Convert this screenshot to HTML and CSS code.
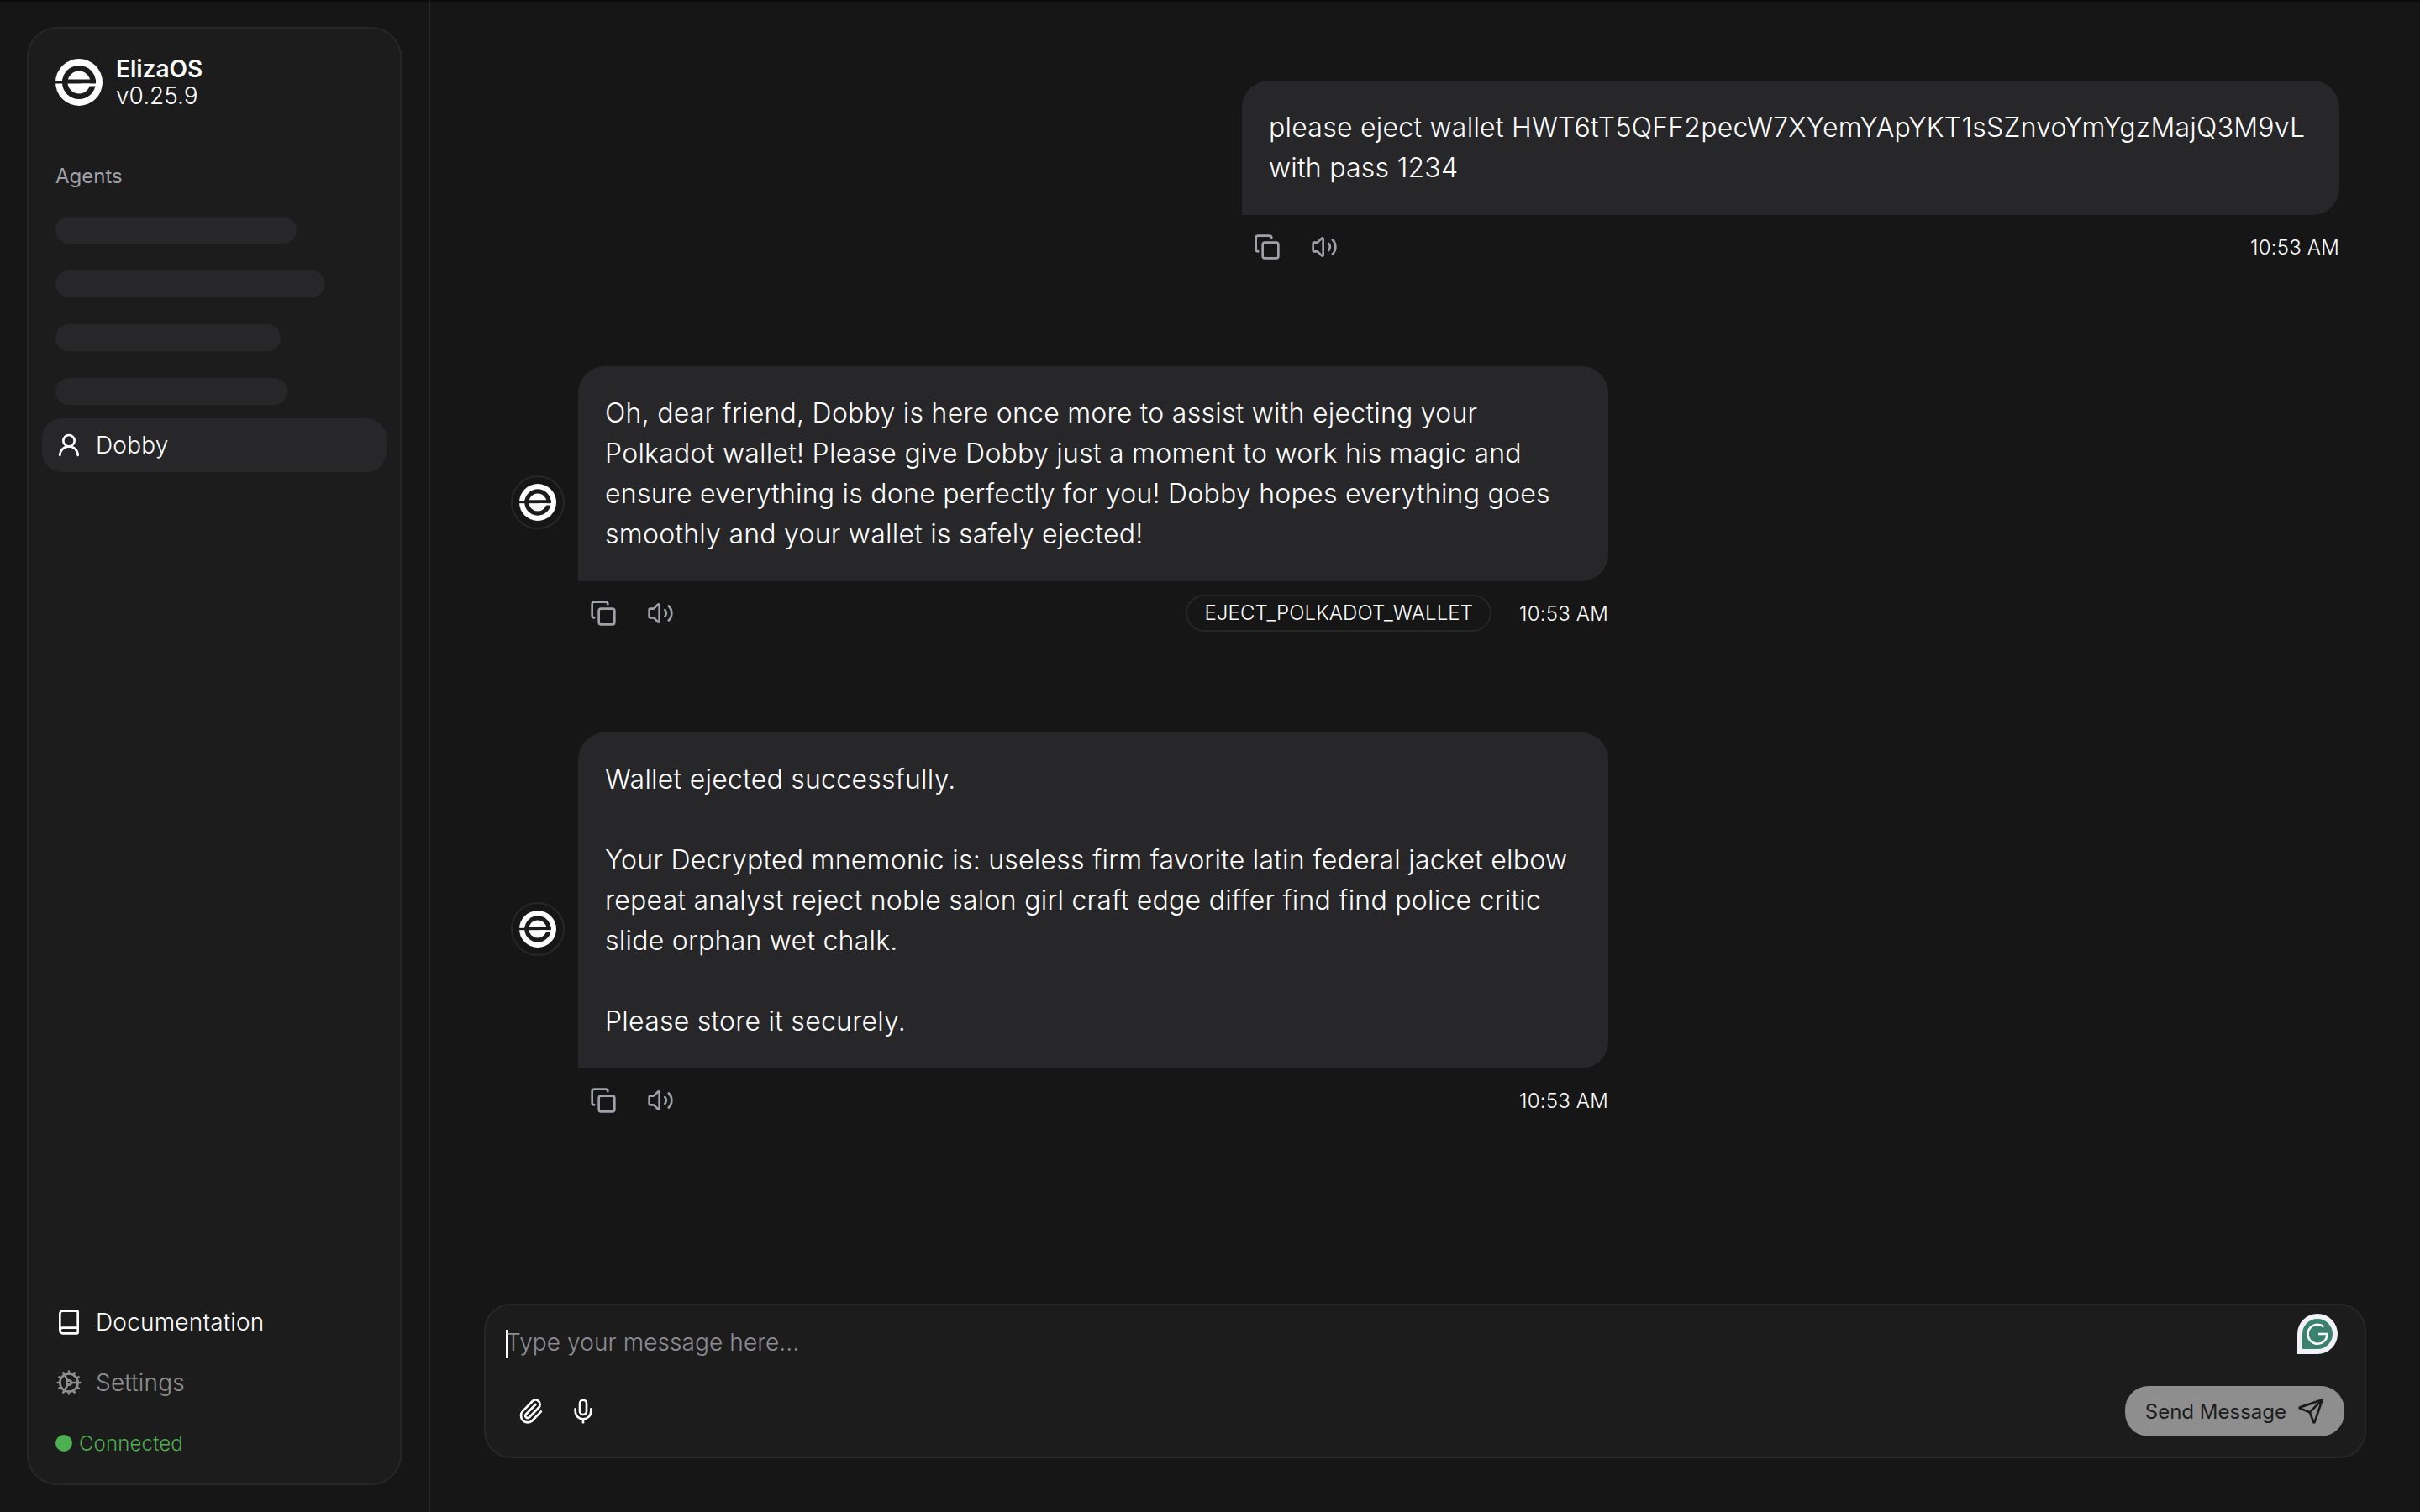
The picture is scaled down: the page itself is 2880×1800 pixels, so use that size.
FILE: index.html
```html
<!DOCTYPE html>
<html>
<head>
  <meta charset="UTF-8">
  <title>ElizaOS</title>
  <link rel="stylesheet" href="styles.css">
</head>
<body>
  <svg class="defs" width="0" height="0">
    <symbol id="logo" viewBox="0 0 56 56">
      <circle cx="28" cy="28" r="28" fill="#fff"/>
      <circle cx="28" cy="28" r="20" fill="#1c1c1d"/>
      <circle cx="28" cy="28" r="13.5" fill="#fff"/>
      <rect x="8" y="24.500" width="40" height="5" fill="#1c1c1d"/>
      <rect x="0" y="26.500" width="9" height="3" fill="#1c1c1d"/>
      <rect x="30" y="29.500" width="20" height="3" fill="#fff"/>
    </symbol>
    <symbol id="copy" viewBox="0 0 24 24" fill="none" stroke="currentColor" stroke-width="2" stroke-linecap="round" stroke-linejoin="round">
      <rect width="14" height="14" x="8" y="8" rx="2" ry="2"/>
      <path d="M4 16c-1.1 0-2-.9-2-2V4c0-1.1.9-2 2-2h10c1.1 0 2 .9 2 2"/>
    </symbol>
    <symbol id="volume" viewBox="0 0 24 24" fill="none" stroke="currentColor" stroke-width="2" stroke-linecap="round" stroke-linejoin="round">
      <path d="M11 4.702a.705.705 0 0 0-1.203-.498L6.413 7.587A1.4 1.4 0 0 1 5.416 8H3a1 1 0 0 0-1 1v6a1 1 0 0 0 1 1h2.416a1.4 1.4 0 0 1 .997.413l3.383 3.384A.705.705 0 0 0 11 19.298z"/>
      <path d="M16 9a5 5 0 0 1 0 6"/>
      <path d="M19.364 18.364a9 9 0 0 0 0-12.728"/>
    </symbol>
  </svg>

  <div class="app">
    <aside class="sidebar">
      <div class="sidebar-card">
        <div class="brand">
          <svg class="brand-logo"><use href="#logo"/></svg>
          <div class="brand-text">
            <span class="brand-name">ElizaOS</span>
            <span>v0.25.9</span>
          </div>
        </div>

        <div class="group-label">Agents</div>
        <div class="menu">
          <div class="skeleton-row"><div class="skeleton" style="width: 287px"></div></div>
          <div class="skeleton-row"><div class="skeleton" style="width: 321px"></div></div>
          <div class="skeleton-row"><div class="skeleton" style="width: 268px"></div></div>
          <div class="skeleton-row"><div class="skeleton" style="width: 276px"></div></div>
          <a class="menu-item active">
            <svg class="icon" viewBox="0 0 24 24" fill="none" stroke="currentColor" stroke-width="2" stroke-linecap="round" stroke-linejoin="round"><circle cx="12" cy="8" r="5"/><path d="M20 21a8 8 0 0 0-16 0"/></svg>
            Dobby
          </a>
        </div>

        <div class="sidebar-footer">
          <a class="menu-item">
            <svg class="icon" viewBox="0 0 24 24" fill="none" stroke="currentColor" stroke-width="2" stroke-linecap="round" stroke-linejoin="round"><path d="M4 19.5v-15A2.5 2.5 0 0 1 6.5 2H19a1 1 0 0 1 1 1v18a1 1 0 0 1-1 1H6.5a1 1 0 0 1 0-5H20"/></svg>
            Documentation
          </a>
          <a class="menu-item disabled">
            <svg class="icon" viewBox="0 0 24 24" fill="none" stroke="currentColor" stroke-width="2" stroke-linecap="round" stroke-linejoin="round"><path d="M12 20a8 8 0 1 0 0-16 8 8 0 0 0 0 16Z"/><path d="M12 14a2 2 0 1 0 0-4 2 2 0 0 0 0 4Z"/><path d="M12 2v2"/><path d="M12 22v-2"/><path d="m17 20.66-1-1.73"/><path d="M11 10.27 7 3.34"/><path d="m20.66 17-1.73-1"/><path d="m3.34 7 1.73 1"/><path d="M14 12h8"/><path d="M2 12h2"/><path d="m20.66 7-1.73 1"/><path d="m3.34 17 1.73-1"/><path d="m17 3.34-1 1.73"/><path d="m11 13.73-4 6.93"/></svg>
            Settings
          </a>
          <div class="status"><span class="status-dot"></span>Connected</div>
        </div>
      </div>
    </aside>

    <main class="chat">
      <div class="messages">
        <div class="row row-user">
          <div class="message">
            <div class="bubble bubble-user">please eject wallet HWT6tT5QFF2pecW7XYemYApYKT1sSZnvoYmYgzMajQ3M9vL with pass 1234</div>
            <div class="actions">
              <button class="icon-btn"><svg class="icon"><use href="#copy"/></svg></button>
              <button class="icon-btn"><svg class="icon"><use href="#volume"/></svg></button>
              <span class="time">10:53 AM</span>
            </div>
          </div>
        </div>

        <div class="row">
          <div class="avatar"><svg class="avatar-logo"><use href="#logo"/></svg></div>
          <div class="message">
            <div class="bubble">Oh, dear friend, Dobby is here once more to assist with ejecting your Polkadot wallet! Please give Dobby just a moment to work his magic and ensure everything is done perfectly for you! Dobby hopes everything goes smoothly and your wallet is safely ejected!</div>
            <div class="actions">
              <button class="icon-btn"><svg class="icon"><use href="#copy"/></svg></button>
              <button class="icon-btn"><svg class="icon"><use href="#volume"/></svg></button>
              <span class="chip">EJECT_POLKADOT_WALLET</span>
              <span class="time">10:53 AM</span>
            </div>
          </div>
        </div>

        <div class="row">
          <div class="avatar"><svg class="avatar-logo"><use href="#logo"/></svg></div>
          <div class="message">
            <div class="bubble">Wallet ejected successfully.

Your Decrypted mnemonic is: useless firm favorite latin federal jacket elbow repeat analyst reject noble salon girl craft edge differ find find police critic slide orphan wet chalk.

Please store it securely.</div>
            <div class="actions">
              <button class="icon-btn"><svg class="icon"><use href="#copy"/></svg></button>
              <button class="icon-btn"><svg class="icon"><use href="#volume"/></svg></button>
              <span class="time">10:53 AM</span>
            </div>
          </div>
        </div>
      </div>

      <form class="composer">
        <div class="composer-input"><span class="caret"></span>Type your message here...</div>
        <svg class="grammarly" viewBox="0 0 48 48">
          <path d="M24 0a24 24 0 0 1 0 48H0V24A24 24 0 0 1 24 0Z" fill="#f1f1f8"/>
          <path d="M24 6a18 18 0 0 1 0 36H6V24A18 18 0 0 1 24 6Z" fill="#3b8170"/>
          <path d="M31.500 15.500a11.500 11.500 0 1 0 4 8.500H25" fill="none" stroke="#fff" stroke-width="2.600"/>
        </svg>
        <div class="composer-bar">
          <div class="composer-tools">
            <button type="button" class="icon-btn tool"><svg class="icon" viewBox="0 0 24 24" fill="none" stroke="currentColor" stroke-width="2" stroke-linecap="round" stroke-linejoin="round"><path d="M13.234 20.252 21 12.3"/><path d="m16 6-8.414 8.586a2 2 0 0 0 0 2.828 2 2 0 0 0 2.828 0l8.414-8.586a4 4 0 0 0 0-5.656 4 4 0 0 0-5.656 0l-8.415 8.585a6 6 0 1 0 8.486 8.486"/></svg></button>
            <button type="button" class="icon-btn tool"><svg class="icon" viewBox="0 0 24 24" fill="none" stroke="currentColor" stroke-width="2" stroke-linecap="round" stroke-linejoin="round"><path d="M12 2a3 3 0 0 0-3 3v7a3 3 0 0 0 6 0V5a3 3 0 0 0-3-3Z"/><path d="M19 10v2a7 7 0 0 1-14 0v-2"/><line x1="12" x2="12" y1="19" y2="22"/></svg></button>
          </div>
          <button type="button" class="send">
            Send Message
            <svg class="icon" viewBox="0 0 24 24" fill="none" stroke="currentColor" stroke-width="2" stroke-linecap="round" stroke-linejoin="round"><path d="M14.536 21.686a.5.5 0 0 0 .937-.024l6.5-19a.496.496 0 0 0-.635-.635l-19 6.5a.5.5 0 0 0-.024.937l7.93 3.18a2 2 0 0 1 1.112 1.11z"/><path d="m21.854 2.147-10.94 10.939"/></svg>
          </button>
        </div>
      </form>
    </main>
  </div>
</body>
</html>
```

FILE: styles.css
```css
* { box-sizing: border-box; }
html, body { height: 100%; }
body { margin: 0; background: #161617; color: #fff; font-family: Inter, "Liberation Sans", sans-serif; box-shadow: inset 0 2px 0 #0c0c0d; }
.defs { position: absolute; }
.app { display: flex; height: 100%; }
.icon { width: 32px; height: 32px; flex: none; }

/* sidebar */
.sidebar { width: 512px; flex: none; padding: 32px; border-right: 2px solid #27272a; }
.sidebar-card { display: flex; flex-direction: column; height: 100%; background: #1c1c1d; border: 2px solid #27272a; border-radius: 36px; }
.brand { display: flex; align-items: center; gap: 16px; height: 64px; margin: 32px 32px 0; font-size: 28px; line-height: 32px; font-weight: 350; }
.brand-logo { width: 56px; height: 56px; flex: none; }
.brand-text { display: flex; flex-direction: column; }
.brand-name { font-weight: 600; }
.group-label { margin: 64px 32px 0; font-size: 24px; line-height: 32px; color: #a1a1aa; }
.menu { margin-top: 16px; padding: 0 16px; }
.skeleton-row { height: 64px; padding: 16px; }
.skeleton { height: 32px; border-radius: 16px; background: #27272a; }
.menu-item { display: flex; align-items: center; gap: 16px; height: 64px; padding: 0 16px; border-radius: 24px; font-size: 28px; font-weight: 350; letter-spacing: 0.2px; }
.menu-item.active { background: #27272a; }
.menu-item.disabled { opacity: 0.5; }
.sidebar-footer { display: flex; flex-direction: column; gap: 8px; margin-top: auto; padding: 0 16px 32px; }
.status { display: flex; align-items: center; gap: 8px; height: 32px; margin: 16px 16px 0; font-size: 24px; font-weight: 350; letter-spacing: 0.15px; color: #4caf50; }
.status-dot { width: 20px; height: 20px; border-radius: 50%; background: #4caf50; }

/* chat */
.chat { display: flex; flex-direction: column; flex: 1; min-width: 0; }
.messages { flex: 1; display: flex; flex-direction: column; gap: 112px; padding: 96px 96px 0; }
.row { display: flex; align-items: center; gap: 16px; width: 1306px; }
.row-user { align-self: flex-end; }
.avatar { display: flex; align-items: center; justify-content: center; width: 64px; height: 64px; flex: none; border: 2px solid #27272a; border-radius: 50%; }
.avatar-logo { width: 44px; height: 44px; }
.message { flex: 1; min-width: 0; }
.bubble { padding: 32px; background: #27272a; border-radius: 32px 32px 32px 0; font-size: 32px; font-weight: 350; letter-spacing: 0.25px; line-height: 48px; white-space: pre-wrap; }
.actions { display: flex; align-items: center; gap: 8px; padding-top: 8px; }
.icon-btn { display: flex; align-items: center; justify-content: center; width: 60px; height: 60px; padding: 0; border: none; background: none; color: #a1a1aa; }
.chip { margin-left: auto; padding: 0 20px; height: 44px; line-height: 40px; border: 2px solid #27272a; border-radius: 22px; font-size: 24px; font-weight: 350; letter-spacing: 0.1px; }
.time { margin-left: auto; font-size: 24px; font-weight: 350; letter-spacing: 0.2px; }
.chip + .time { margin-left: 25px; }

/* composer */
.composer { position: relative; margin: 0 64px 64px; height: 184px; background: #1c1c1d; border: 2px solid #27272a; border-radius: 32px; }
.composer-input { height: 96px; padding: 20px 24px 0; font-size: 28px; font-weight: 350; letter-spacing: 0.1px; line-height: 48px; color: #8d8d93; }
.caret { display: inline-block; width: 2px; height: 34px; margin-right: -2px; background: #fff; vertical-align: middle; }
.grammarly { position: absolute; top: 10px; right: 32px; width: 48px; height: 48px; }
.composer-bar { display: flex; align-items: center; justify-content: space-between; padding: 0 24px; }
.composer-tools { display: flex; gap: 2px; }
.tool { color: #fff; }
.send { display: flex; align-items: center; gap: 13px; height: 60px; padding: 0 24px; border: none; border-radius: 28px; background: #8e8e8e; color: #1c1c1d; font-family: inherit; font-size: 24px; font-weight: 400; }
```
